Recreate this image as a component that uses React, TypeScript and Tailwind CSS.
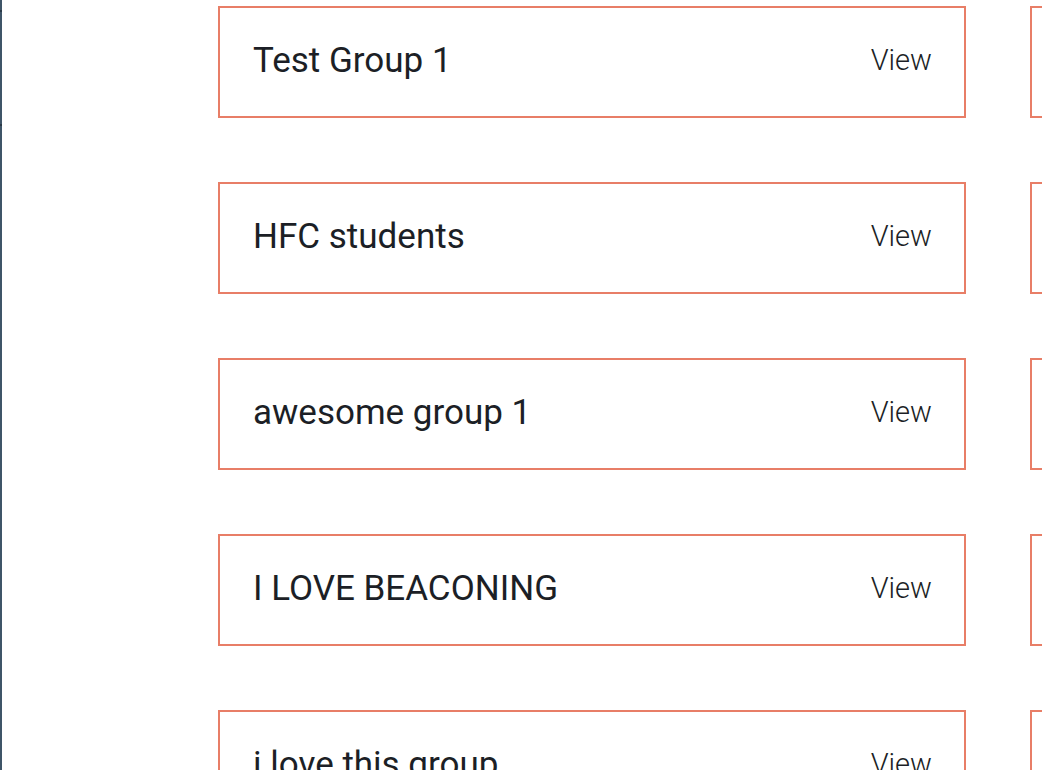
import React from 'react';

const groups = ['Test Group 1', 'HFC students', 'awesome group 1', 'I LOVE BEACONING', 'i love this group'];

function GroupCard({ name }: { name: string }) {
  return (
    <div className="flex h-[112px] items-center justify-between border-2 border-[#e87e67] bg-white pb-[4px] pl-[33px] pr-[32px]">
      <span className="text-[35px] leading-none text-[#1c1f26]">{name}</span>
      <span className="text-[29px] font-light leading-none text-[#1c1f26]">View</span>
    </div>
  );
}

export default function App() {
  return (
    <div
      className="flex h-[770px] w-[1042px] overflow-hidden bg-white"
      style={{ fontFamily: 'Roboto, "Liberation Sans", sans-serif' }}
    >
      <div className="relative w-[2px] shrink-0 bg-[#3f5568]">
        <div className="absolute left-0 top-[10px] h-[2px] w-[2px] bg-[#2a3a48]" />
        <div className="absolute left-0 top-[124px] h-[2px] w-[2px] bg-[#2a3a48]" />
      </div>
      <div className="grid shrink-0 grid-cols-[748px_748px] gap-x-[64px] gap-y-[64px] pl-[216px] pt-[6px]">
        {groups.map((g) => (
          <React.Fragment key={g}>
            <GroupCard name={g} />
            <GroupCard name={g} />
          </React.Fragment>
        ))}
      </div>
    </div>
  );
}
